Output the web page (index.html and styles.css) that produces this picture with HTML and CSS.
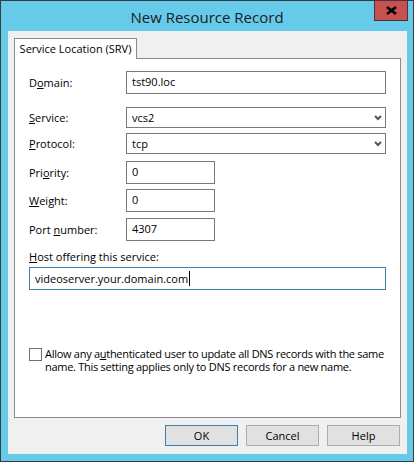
FILE: index.html
```html
<!DOCTYPE html>
<html>
<head>
<meta charset="utf-8">
<link rel="stylesheet" href="styles.css">
</head>
<body>
<div class="window">
  <div class="titlebar">
    <div class="title">New Resource Record</div>
    <div class="close"><svg width="11" height="9" viewBox="0 0 11 9"><path d="M1 1 L10 8 M10 1 L1 8" stroke="#000" stroke-width="2.6" fill="none"/></svg></div>
  </div>
  <div class="client">
    <div class="tabs"><div class="tab">Service Location (SRV)</div></div>
    <div class="panel">
      <div class="row r-domain">
        <label class="lbl">D<u>o</u>main:</label>
        <div class="field tall">tst90.loc</div>
      </div>
      <div class="row r-service">
        <label class="lbl"><u>S</u>ervice:</label>
        <div class="field select">vcs2<svg class="chev" width="8" height="6" viewBox="0 0 8 6"><path d="M1 1 L4 4 L7 1" stroke="#555" stroke-width="2" fill="none"/></svg></div>
      </div>
      <div class="row r-protocol">
        <label class="lbl"><u>P</u>rotocol:</label>
        <div class="field select">tcp<svg class="chev" width="8" height="6" viewBox="0 0 8 6"><path d="M1 1 L4 4 L7 1" stroke="#555" stroke-width="2" fill="none"/></svg></div>
      </div>
      <div class="row r-priority">
        <label class="lbl">Pri<u>o</u>rity:</label>
        <div class="field short">0</div>
      </div>
      <div class="row r-weight">
        <label class="lbl"><u>W</u>eight:</label>
        <div class="field short">0</div>
      </div>
      <div class="row r-port">
        <label class="lbl">Port <u>n</u>umber:</label>
        <div class="field short">4307</div>
      </div>
      <div class="host-lbl"><u>H</u>ost offering this service:</div>
      <div class="field host">videoserver.your.domain.com<span class="caret"></span></div>
      <div class="check-row">
        <span class="checkbox"></span>
        <span class="check-text">Allow any a<u>u</u>thenticated user to update all DNS records with the same name. This setting applies only to DNS records for a new name.</span>
      </div>
    </div>
    <div class="buttons">
      <button class="btn default">OK</button>
      <button class="btn">Cancel</button>
      <button class="btn">Help</button>
    </div>
  </div>
</div>
</body>
</html>
```
FILE: styles.css
```css
* { box-sizing: border-box; }
html, body { margin: 0; padding: 0; }
body {
  width: 414px;
  height: 462px;
  font-family: "Open Sans", "Noto Sans", sans-serif;
  font-size: 11px;
  color: #000;
}
.window {
  width: 414px;
  height: 462px;
  background: #66cbea;
  border: 1px solid #3a3a3a;
  padding: 0 6px 7px 7px;
  display: flex;
  flex-direction: column;
}
.titlebar {
  height: 30px;
  display: grid;
  grid-template-columns: 1fr auto 1fr;
  margin: 0 -6px 0 -7px;
}
.title {
  grid-column: 2;
  font-size: 15px;
  line-height: 30px;
  color: #1b1b1b;
  padding-top: 1px;
}
.close {
  grid-column: 3;
  justify-self: end;
  align-self: start;
  margin-top: -1px;
  margin-right: 5px;
  width: 34px;
  height: 21px;
  background: #c75050;
  border: 1px solid #4a3434;
  display: flex;
  align-items: center;
  justify-content: center;
}
.client {
  flex: 1;
  background: #f0f0f0;
  padding: 7px 6px 0 6px;
  display: flex;
  flex-direction: column;
}
.tabs { display: flex; height: 21px; position: relative; z-index: 1; margin-bottom: -1px; }
.tab {
  width: 123px;
  height: 21px;
  background: #fff;
  border: 1px solid #898c95;
  border-bottom: none;
  text-align: center;
  line-height: 20px;
  font-size: 11px;
}
.panel {
  height: 360px;
  background: #fff;
  border: 1px solid #898c95;
  padding: 0 14px 0 14px;
  display: flex;
  flex-direction: column;
}
.row {
  display: grid;
  grid-template-columns: 97px 1fr;
  align-items: center;
}
.lbl { line-height: 15px; }
.field {
  border: 1px solid #7a7a7a;
  background: #fff;
  padding: 0 5px;
  height: 23px;
  line-height: 19px;
  white-space: nowrap;
}
.field.select {
  height: 21px;
  display: flex;
  align-items: center;
  justify-content: space-between;
  padding: 0 3px 0 5px;
  line-height: 19px;
}
.chev { display: block; }
.field.short { width: 89px; }
.r-domain { margin-top: 12px; }
.r-service { margin-top: 13px; }
.r-protocol { margin-top: 5px; }
.r-priority { margin-top: 7px; }
.r-weight { margin-top: 5px; }
.r-port { margin-top: 6px; }
.host-lbl { margin-top: 8px; line-height: 16px; }
.field.host {
  margin-top: 2px;
  border-color: #3c7fb1;
  display: flex;
  align-items: center;
}
.caret { display: inline-block; width: 1px; height: 15px; background: #000; margin-left: 1px; }
.check-row {
  margin-top: 57px;
  display: flex;
  align-items: flex-start;
}
.checkbox {
  flex: none;
  width: 13px;
  height: 13px;
  border: 1px solid #707070;
  background: #fff;
  margin-top: 1px;
  margin-right: 3px;
}
.check-text { line-height: 13px; letter-spacing: -0.28px; }
.buttons {
  display: flex;
  justify-content: flex-end;
  gap: 8px;
  padding: 7px 1px 0 0;
}
.btn {
  width: 73px;
  height: 21px;
  background: #e1e1e1;
  border: 1px solid #adadad;
  font-family: inherit;
  font-size: 11px;
  color: #000;
  padding: 0;
  margin: 0;
}
.btn.default { border-color: #3c7fb1; }
```
